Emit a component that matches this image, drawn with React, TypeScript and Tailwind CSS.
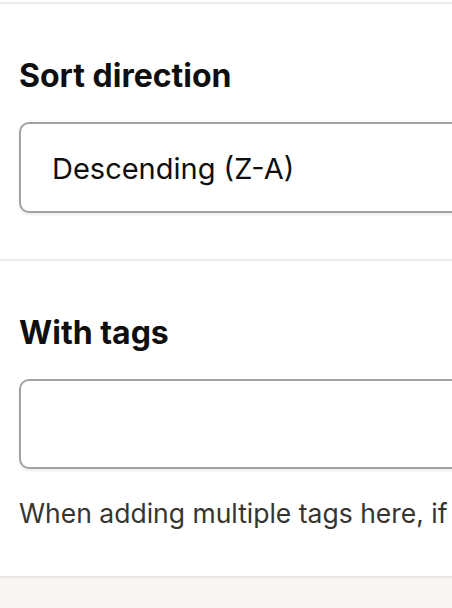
export default function App() {
  return (
    <div
      className="w-[452px] h-[608px] overflow-hidden bg-white"
      style={{ fontFamily: "Inter, 'Noto Sans', sans-serif" }}
    >
      <div className="mt-[2px] border-t-2 border-[#ececec] w-[700px]">
        <section className="px-[19px] pt-[50px] pb-[46px]">
          <h2 className="text-[32px] leading-[44px] font-bold text-[#0f0f0f]">Sort direction</h2>
          <div className="mt-[24px] h-[91px] rounded-[10px] border-2 border-[#a3a3a3] shadow-[0_2px_3px_rgba(0,0,0,0.08)] flex items-center px-[31px] pt-[2px]">
            <span className="text-[29px] text-[#0f0f0f]">Descending (Z-A)</span>
          </div>
        </section>
        <div className="border-t-2 border-[#ececec]" />
        <section className="px-[19px] pt-[50px] pb-[45px]">
          <h2 className="text-[32px] leading-[44px] font-bold text-[#0f0f0f]">With tags</h2>
          <div className="mt-[24px] h-[90px] rounded-[10px] border-2 border-[#a3a3a3] shadow-[0_2px_3px_rgba(0,0,0,0.08)]" />
          <p className="mt-[26px] text-[26.5px] leading-[36px] text-[#37352f] whitespace-nowrap">
            When adding multiple tags here, if
          </p>
        </section>
        <div className="border-t-2 border-[#e9e7e2] bg-[#f7f6f3] h-[40px]" />
      </div>
    </div>
  );
}
